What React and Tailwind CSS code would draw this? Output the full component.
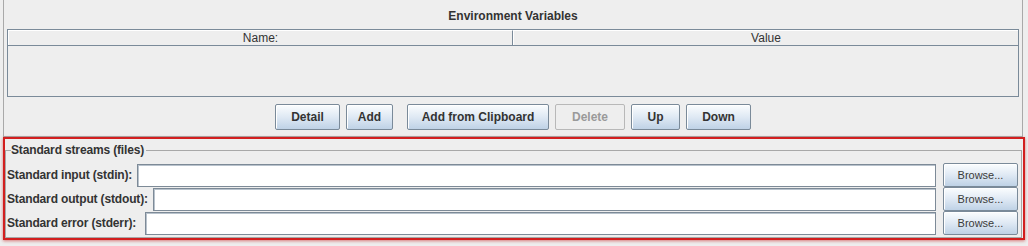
import React from "react";

const btn =
  "h-[26px] border border-[#7a8a99] rounded-[2px] bg-linear-to-b from-[#fbfdfe] via-[#dfe9f4] to-[#bfd2e6] text-[12px] font-bold text-[#333333] flex items-center justify-center shadow-[inset_1px_1px_0_#ffffff]";

function Row({ label, lw }) {
  return (
    <div className="flex items-center h-[24px]">
      <div className={`${lw} shrink-0 whitespace-nowrap text-[12px] font-bold text-[#333333] leading-[14px] tracking-[-0.15px]`}>{label}</div>
      <div className="flex-1 h-[23px] bg-white border border-[#7d8a97] shadow-[inset_1px_1px_0_#b8c2cc]" />
      <div className="w-[75px] ml-[7px] h-[24px] border border-[#7a8a99] rounded-[2px] bg-linear-to-b from-[#fbfdfe] via-[#dfe9f4] to-[#bfd2e6] text-[11px] text-[#3a3a3a] flex items-center justify-center shadow-[inset_1px_1px_0_#ffffff]">
        Browse...
      </div>
    </div>
  );
}

export default function App() {
  return (
    <div className="w-[1028px] h-[246px] bg-[#eeeeee] overflow-hidden font-['Liberation_Sans',Arial,sans-serif]">
      {/* top panel */}
      <div className="ml-[3px] w-[1020px] h-[137px] border-x border-b border-[#a9a9a9] pt-[9px] px-[3px] pb-[6px] flex flex-col">
        <div className="h-[14px] leading-[14px] text-center text-[12px] font-bold text-[#333333]">Environment Variables</div>
        <div className="mt-[6px] h-[69px] border border-[#7a8a99] flex flex-col">
          <div className="h-[16px] flex border-b border-[#7a8a99] text-[12px] text-[#333333] leading-[14px]">
            <div className="w-[505px] border-r border-[#7a8a99] border-t border-t-white border-l border-l-white text-center">Name:</div>
            <div className="flex-1 border-t border-t-white border-l border-l-white text-center">Value</div>
          </div>
          <div className="flex-1" />
        </div>
        <div className="mt-[7px] flex justify-center gap-[6px]">
          <div className={`${btn} w-[65px]`}>Detail</div>
          <div className={`${btn} w-[47px]`}>Add</div>
          <div className={`${btn} w-[142px] ml-[8px]`}>Add from Clipboard</div>
          <div className="h-[26px] w-[70px] border border-[#b8b8b8] rounded-[2px] bg-[#eeeeee] text-[12px] font-bold text-[#9a9a9a] flex items-center justify-center">Delete</div>
          <div className={`${btn} w-[49px]`}>Up</div>
          <div className={`${btn} w-[65px]`}>Down</div>
        </div>
      </div>

      {/* highlighted streams box */}
      <div className="ml-[3px] w-[1022px] h-[103px] border-2 border-[#d21f1f] shadow-[0_1px_3px_rgba(200,40,40,0.6)] pr-[1px]">
        <fieldset className="mt-[4px] w-[1017px] border border-[#a8a8a8] pl-[1px] pr-[3px] pt-[6px] pb-0 h-[95px]">
          <legend className="ml-[4px] pr-[2px] text-[12px] font-bold text-[#333333] leading-[14px] tracking-[-0.15px]">Standard streams (files)</legend>
          <Row label="Standard input (stdin):" lw="w-[130px]" />
          <Row label="Standard output (stdout):" lw="w-[146px]" />
          <Row label="Standard error (stderr):" lw="w-[138px]" />
        </fieldset>
      </div>
    </div>
  );
}
